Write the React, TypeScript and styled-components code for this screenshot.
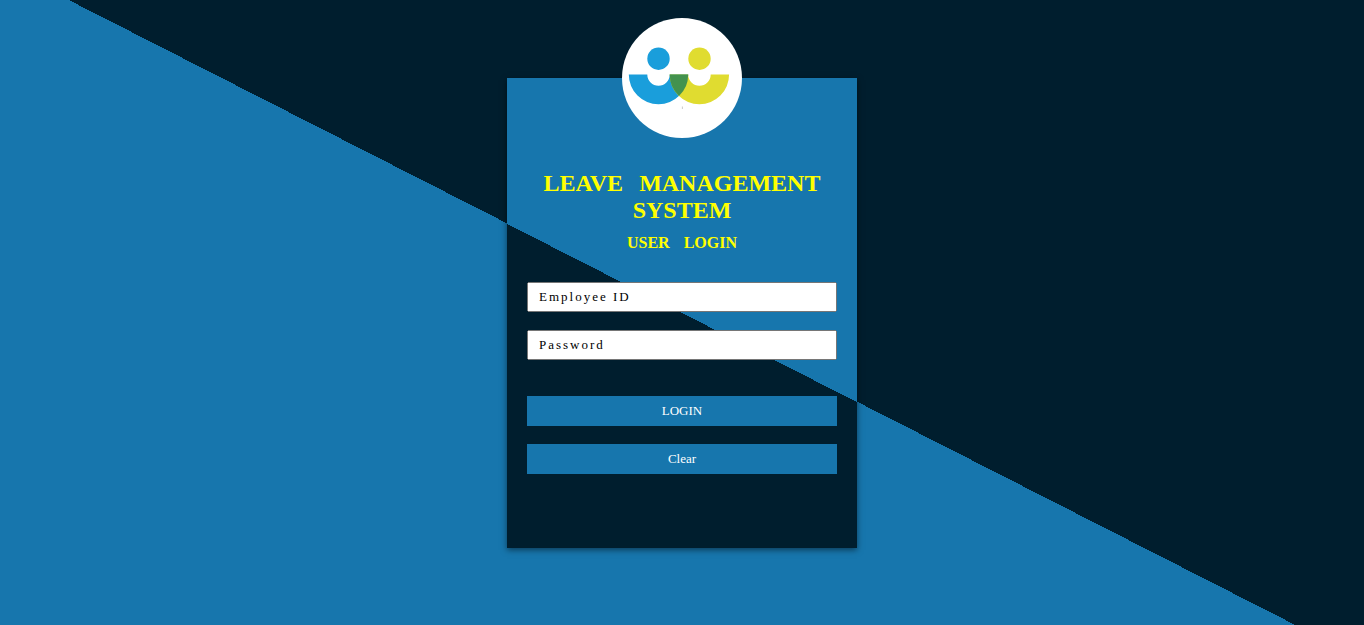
import React from "react";
import styled, { createGlobalStyle } from "styled-components";

const BLUE = "#1776ad";
const NAVY = "#001e2e";

const GlobalStyle = createGlobalStyle`
  *, *::before, *::after {
    box-sizing: border-box;
  }

  body {
    margin: 0;
    font-family: "Liberation Serif", "Times New Roman", serif;
  }
`;

const Page = styled.main`
  display: grid;
  place-items: center;
  min-height: 100vh;
  background: linear-gradient(27deg, ${BLUE} 50%, ${NAVY} 50%);
`;

const Card = styled.section`
  position: relative;
  width: 100%;
  max-width: 350px;
  padding: 92px 20px 74px;
  background: linear-gradient(27deg, ${NAVY} 50%, ${BLUE} 50%);
  box-shadow: 0 2px 6px rgba(0, 0, 0, 0.5);
`;

const Avatar = styled.div`
  position: absolute;
  top: -60px;
  left: 50%;
  width: 120px;
  height: 120px;
  margin-left: -60px;
  overflow: hidden;
  border-radius: 50%;
  background: #fff;

  svg {
    display: block;
  }
`;

const Title = styled.h1`
  margin: 0;
  color: #ff0;
  font-size: 24px;
  line-height: 27px;
  text-align: center;
  word-spacing: 10px;
`;

const Subtitle = styled.h2`
  margin: 10px 0 30px;
  color: #ff0;
  font-size: 16px;
  line-height: 18px;
  text-align: center;
  word-spacing: 10px;
`;

const Form = styled.form`
  display: grid;
  gap: 18px;
`;

const Field = styled.input`
  width: 100%;
  height: 30px;
  padding: 0 10px;
  color: #000;
  font-family: inherit;
  font-size: 13px;
  letter-spacing: 2px;

  &::placeholder {
    color: #000;
    opacity: 1;
  }
`;

const Actions = styled.div`
  display: grid;
  gap: 18px;
  margin-top: 18px;
`;

const Button = styled.button`
  height: 30px;
  padding: 0;
  border: 0;
  background: ${BLUE};
  color: #fff;
  font-family: inherit;
  font-size: 13px;
  cursor: pointer;
`;

function Logo() {
  return (
    <svg width="120" height="120" viewBox="0 0 120 120" aria-hidden="true">
      <circle cx="36.5" cy="40.7" r="11.2" fill="#1a9edb" />
      <circle cx="77.5" cy="40.7" r="11.2" fill="#e0dc30" />
      <path
        d="M6.8 56.6H25.3A11.2 11.2 0 0 0 47.7 56.6H66.2A29.7 29.7 0 0 1 6.8 56.6Z"
        fill="#1a9edb"
      />
      <path
        d="M47.7 56.6H66.2A11.2 11.2 0 0 0 88.7 56.6H107.1A29.7 29.7 0 0 1 47.7 56.6Z"
        fill="#e0dc30"
      />
      <path
        d="M47.7 56.6H66.2A29.7 29.7 0 0 1 57 78.1A29.7 29.7 0 0 1 47.7 56.6Z"
        fill="#43924e"
      />
      <path d="M60.4 88.5V91" stroke="#b5b5b5" strokeWidth="0.7" />
    </svg>
  );
}

export default function App() {
  return (
    <>
      <GlobalStyle />
      <Page>
        <Card>
          <Avatar>
            <Logo />
          </Avatar>
          <Title>LEAVE MANAGEMENT SYSTEM</Title>
          <Subtitle>USER LOGIN</Subtitle>
          <Form onSubmit={(event) => event.preventDefault()}>
            <Field
              type="text"
              name="employeeId"
              placeholder="Employee ID"
              aria-label="Employee ID"
            />
            <Field
              type="password"
              name="password"
              placeholder="Password"
              aria-label="Password"
            />
            <Actions>
              <Button type="submit">LOGIN</Button>
              <Button type="reset">Clear</Button>
            </Actions>
          </Form>
        </Card>
      </Page>
    </>
  );
}
